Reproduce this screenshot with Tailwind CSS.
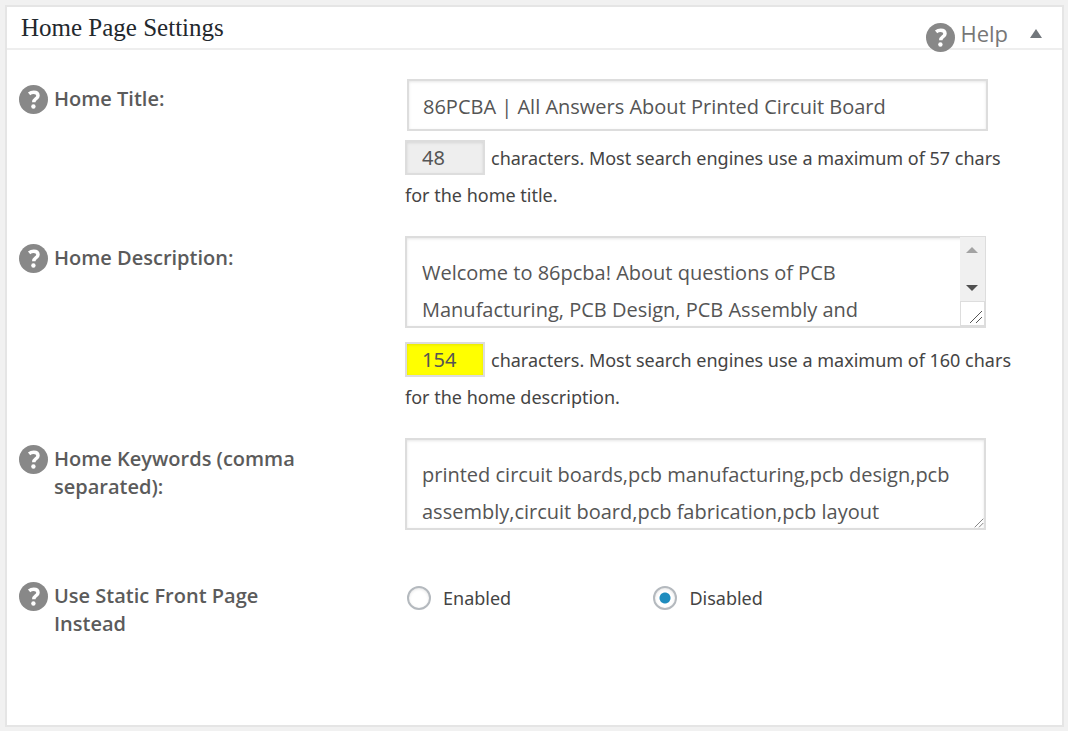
<!DOCTYPE html>
<html lang="en">
<head>
<meta charset="utf-8">
<meta name="viewport" content="width=device-width, initial-scale=1">
<title>Home Page Settings</title>
<script src="https://cdn.jsdelivr.net/npm/@tailwindcss/browser@4"></script>
</head>
<body class="bg-[#f1f1f1] font-['Open_Sans',sans-serif] text-[#444]">
<svg class="hidden" aria-hidden="true">
  <symbol id="help" viewBox="0 0 29 29">
    <circle cx="14.5" cy="14.5" r="14.5" fill="#888"/>
    <path d="M10.1 8.9C11.4 7.8 12.9 7.3 14.7 7.3C17.5 7.3 19 8.6 19 10.7C19 13.9 14.8 13.5 14.8 17.2" fill="none" stroke="#fff" stroke-width="3.5"/>
    <circle cx="14.4" cy="21.5" r="2.2" fill="#fff"/>
  </symbol>
  <symbol id="grip" viewBox="0 0 14 14">
    <path d="M1 13L13 1M7 13L13 7" fill="none" stroke="#555" stroke-width="1"/>
  </symbol>
</svg>
<main class="flex min-h-screen pt-[5px] pr-1 pb-1 pl-[5px]">
  <section class="flex-1 border-2 border-[#e5e5e5] bg-white">
    <header class="flex h-[43px] items-center border-b-2 border-[#eee] pr-5 pl-[14px]">
      <h2 class="flex-1 font-['Liberation_Serif',serif] text-[25px] leading-[40px] text-[#23282d]">Home Page Settings</h2>
      <a href="#" class="mr-[22px] flex items-start gap-[5px] pt-4 text-[22px] leading-[28px] text-[#777]">
        <svg class="mt-1 size-[29px]" aria-hidden="true"><use href="#help"/></svg>Help</a>
      <button type="button" aria-label="Toggle panel" class="mt-4 mb-1"><svg class="h-[9px] w-3" viewBox="0 0 12 9"><path d="M6 0L12 9H0Z" fill="#72777c"/></svg></button>
    </header>
    <form class="pt-[29px] pr-[39px] pl-3">
      <div class="grid grid-cols-[386px_1fr]">
        <div class="flex gap-[6px] pt-[6px] pr-20">
          <button type="button" aria-label="Help on home title" class="size-[29px] shrink-0"><svg class="size-[29px]"><use href="#help"/></svg></button>
          <label for="title" class="text-[20px] leading-[28px] font-semibold text-[#5b5b5b]">Home Title:</label>
        </div>
        <div>
          <input id="title" type="text" value="86PCBA | All Answers About Printed Circuit Board" class="ml-[2px] block h-[52px] w-[94%] border-2 border-[#ddd] px-[14px] pt-[2px] text-[20px] text-[#555] shadow-[inset_0_1px_3px_#0000001a]">
          <p class="mt-[9px] font-['Noto_Sans',sans-serif] text-[18px] leading-[37px]"><input type="text" readonly value="48" aria-label="Title length" class="mr-[6px] h-[35px] w-20 border-2 border-[#ddd] bg-[#eee] px-[15px] align-baseline text-[20px] text-[#555] shadow-[inset_0_1px_3px_#0000001a]">characters. Most search engines use a maximum of 57 chars for the home title.</p>
        </div>
      </div>
      <div class="mt-[22px] grid grid-cols-[386px_1fr]">
        <div class="flex gap-[6px] pt-2 pr-20">
          <button type="button" aria-label="Help on home description" class="size-[29px] shrink-0"><svg class="size-[29px]"><use href="#help"/></svg></button>
          <label for="desc" class="text-[20px] leading-[28px] font-semibold text-[#5b5b5b]">Home Description:</label>
        </div>
        <div>
          <div class="relative w-[94%]">
            <textarea id="desc" class="block h-[92px] w-full resize-none overflow-hidden border-2 border-[#ddd] py-4 pr-10 pl-[15px] text-[20px] leading-[37px] text-[#555] shadow-[inset_0_1px_3px_#0000001a]">Welcome to 86pcba! About questions of PCB Manufacturing, PCB Design, PCB Assembly and</textarea>
            <div class="absolute top-[1px] right-[1px] bottom-[2px] flex w-[25px] flex-col bg-[#f0f0f0]" aria-hidden="true">
              <div class="flex flex-1 flex-col items-center justify-between pt-[10px] pb-[10px]">
                <svg class="h-[6px] w-3" viewBox="0 0 12 6"><path d="M6 0L12 6H0Z" fill="#a3a3a3"/></svg>
                <svg class="h-[6px] w-3" viewBox="0 0 12 6"><path d="M0 0H12L6 6Z" fill="#505050"/></svg>
              </div>
              <div class="flex h-[25px] items-end justify-end border border-[#ddd] bg-white pr-[1px] pb-[1px]"><svg class="size-[14px]"><use href="#grip"/></svg></div>
            </div>
          </div>
          <p class="mt-[14px] font-['Noto_Sans',sans-serif] text-[18px] leading-[37px]"><input type="text" readonly value="154" aria-label="Description length" class="mr-[6px] h-[35px] w-20 border-2 border-[#ddd] bg-[#ff0] px-[15px] align-baseline text-[20px] text-[#555] shadow-[inset_0_1px_3px_#0000001a]">characters. Most search engines use a maximum of 160 chars for the home description.</p>
        </div>
      </div>
      <div class="mt-[22px] grid grid-cols-[386px_1fr]">
        <div class="flex gap-[6px] pt-[7px] pr-20">
          <button type="button" aria-label="Help on home keywords" class="size-[29px] shrink-0"><svg class="size-[29px]"><use href="#help"/></svg></button>
          <label for="keys" class="text-[20px] leading-[28px] font-semibold text-[#5b5b5b]">Home Keywords (comma separated):</label>
        </div>
        <div>
          <div class="relative w-[94%]">
            <textarea id="keys" class="block h-[92px] w-full resize-none overflow-hidden border-2 border-[#ddd] py-4 pr-4 pl-[15px] text-[20px] leading-[37px] text-[#555] shadow-[inset_0_1px_3px_#0000001a]">printed circuit boards,pcb manufacturing,pcb design,pcb assembly,circuit board,pcb fabrication,pcb layout</textarea>
            <svg class="absolute right-[2px] bottom-[2px] size-[10px]" aria-hidden="true"><use href="#grip"/></svg>
          </div>
        </div>
      </div>
      <div class="mt-[50px] grid grid-cols-[386px_1fr]">
        <div class="flex gap-[6px] pt-[2px] pr-20">
          <button type="button" aria-label="Help on static front page" class="size-[29px] shrink-0"><svg class="size-[29px]"><use href="#help"/></svg></button>
          <span id="static" class="text-[20px] leading-[28px] font-semibold text-[#5b5b5b]">Use Static Front Page Instead</span>
        </div>
        <div role="radiogroup" aria-labelledby="static" class="flex items-start pl-[2px] font-['Noto_Sans',sans-serif] text-[18px] leading-[36px]">
          <label class="flex w-[40%] items-center gap-3"><input type="radio" name="front" class="size-6 appearance-none rounded-full border-2 border-[#b4b9be] bg-white shadow-[inset_0_1px_3px_#0000001a]">Enabled</label>
          <label class="flex items-center gap-3"><input type="radio" name="front" checked class="size-6 appearance-none rounded-full border-2 border-[#b4b9be] bg-white bg-[radial-gradient(circle,#1e8cbe_5px,transparent_6px)] shadow-[inset_0_1px_3px_#0000001a]">Disabled</label>
        </div>
      </div>
    </form>
  </section>
</main>
</body>
</html>
